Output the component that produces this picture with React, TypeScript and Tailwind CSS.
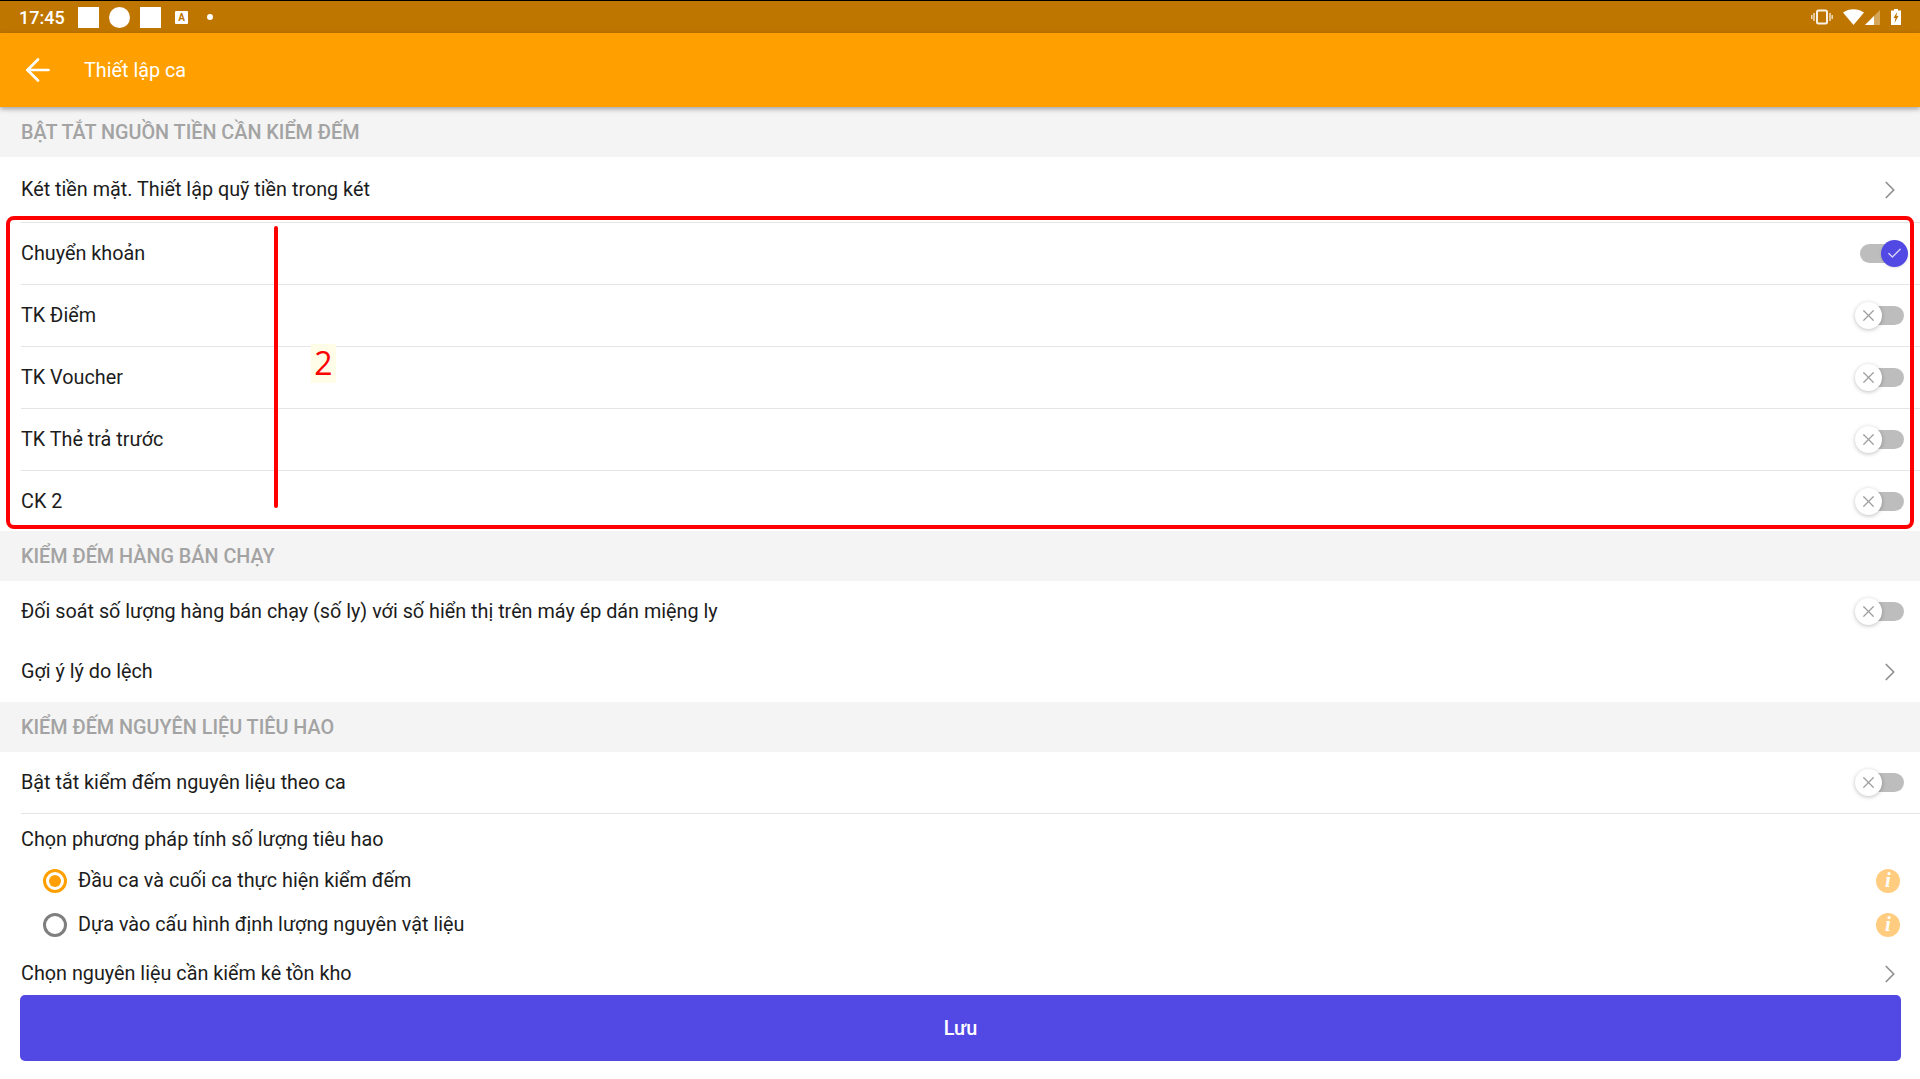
import { ArrowLeft, Check, ChevronRight, X } from "lucide-react";

function Section({ title }: { title: string }) {
  return (
    <div className="h-[50px] flex items-center px-[21px] pt-[2px] bg-[#f4f4f4] text-[19.8px] font-medium text-[#a3a3a3]">
      {title}
    </div>
  );
}

function Toggle({ on }: { on?: boolean }) {
  return (
    <div className="relative w-[44px] h-[19px] rounded-full bg-[#bdbdbd]">
      {on ? (
        <div className="absolute -right-[4px] -top-[4px] w-[27px] h-[27px] rounded-full bg-[#5248e4] shadow flex items-center justify-center">
          <Check size={17} strokeWidth={2} className="text-[#d5d2f8]" />
        </div>
      ) : (
        <div className="absolute -left-[5px] -top-[4px] w-[27px] h-[27px] rounded-full bg-white shadow-[0_1px_4px_rgba(0,0,0,0.25)] flex items-center justify-center">
          <X size={19} strokeWidth={1.5} className="text-[#9e9e9e]" />
        </div>
      )}
    </div>
  );
}

function Row({
  label,
  height,
  divider,
  children,
}: {
  label: string;
  height: string;
  divider?: boolean;
  children?: React.ReactNode;
}) {
  return (
    <div className={`${height} ml-[21px] flex items-center justify-between pr-[16px] ${divider ? "border-b border-[#e5e5e5]" : ""}`}>
      <span>{label}</span>
      {children}
    </div>
  );
}

function Chevron() {
  return <ChevronRight size={30} strokeWidth={1.4} className="text-[#8f8f8f] -mr-[1px]" />;
}

function Info() {
  return (
    <div className="w-[24px] h-[24px] rounded-full bg-[#ffcc80] flex items-center justify-center text-white font-bold italic text-[21px] font-['Liberation_Serif',serif]">
      i
    </div>
  );
}

function Radio({ label, on }: { label: string; on?: boolean }) {
  return (
    <div className="h-[44px] flex items-center justify-between pl-[43px] pr-[20px]">
      <div className="flex items-center gap-[11px]">
        <div className={`w-[24px] h-[24px] rounded-full border-[3px] flex items-center justify-center ${on ? "border-[#ffa000]" : "border-[#7f7f7f]"}`}>
          {on && <div className="w-[12px] h-[12px] rounded-full bg-[#ffa000]" />}
        </div>
        <span>{label}</span>
      </div>
      <Info />
    </div>
  );
}

export default function App() {
  return (
    <div className="relative h-[1079px] bg-white overflow-hidden font-['Roboto',sans-serif] text-[19.8px] text-[#1c1c1c]">
      {/* status bar */}
      <div className="h-[33px] bg-[#bf7600] border-t border-black flex items-center justify-between pl-[19px] pr-[18px] text-white">
        <div className="flex items-center">
          <span className="text-[18px] font-medium w-[59px]">17:45</span>
          <div className="w-[21px] h-[21px] bg-white" />
          <div className="w-[21px] h-[21px] bg-white rounded-full ml-[10px]" />
          <div className="w-[21px] h-[21px] bg-white ml-[10px]" />
          <div className="w-[13px] h-[13px] ml-[14px] bg-white rounded-[1px] text-[#bf7600] text-[10px] font-bold leading-[13px] text-center">A</div>
          <div className="w-[6px] h-[6px] rounded-full bg-white ml-[19px]" />
        </div>
        <div className="flex items-center mr-[1px]">
          <svg width="22" height="16" viewBox="0 0 22 16" fill="none">
            <rect x="6" y="1.5" width="10" height="13" rx="1.5" stroke="white" strokeWidth="2" opacity="0.9" />
            <path d="M3 4v8M19 4v8M0.8 6v4M21.2 6v4" stroke="white" strokeWidth="1.6" opacity="0.7" />
          </svg>
          <svg width="21" height="16" viewBox="0 0 21 16" className="ml-[10px]">
            <path d="M0 3.5C6 -1 15 -1 21 3.5L10.5 16z" fill="white" />
          </svg>
          <svg width="15" height="15" viewBox="0 0 15 15" className="ml-[1px]">
            <path d="M15 0V15H0z" fill="white" opacity="0.35" />
            <path d="M9 6V15H0z" fill="white" />
          </svg>
          <svg width="10" height="16" viewBox="0 0 10 16" className="ml-[11px]">
            <path d="M3 0h4v1.5h3V16H0V1.5h3z" fill="white" />
            <path d="M6 3L2.5 9h2L3.5 14 7.5 7h-2z" fill="#bf7600" />
          </svg>
        </div>
      </div>

      {/* app bar */}
      <div className="relative z-10 h-[74px] bg-[#ffa000] flex items-center pl-[20px] text-white shadow-[0_2px_5px_rgba(0,0,0,0.35)]">
        <ArrowLeft size={36} strokeWidth={1.8} />
        <span className="ml-[28px] mt-[2px] text-[19.8px]">Thiết lập ca</span>
      </div>

      <Section title="BẬT TẮT NGUỒN TIỀN CẦN KIỂM ĐẾM" />
      <Row label="Két tiền mặt. Thiết lập quỹ tiền trong két" height="h-[66px]" divider>
        <Chevron />
      </Row>
      <Row label="Chuyển khoản" height="h-[62px]" divider>
        <Toggle on />
      </Row>
      <Row label="TK Điểm" height="h-[62px]" divider>
        <Toggle />
      </Row>
      <Row label="TK Voucher" height="h-[62px]" divider>
        <Toggle />
      </Row>
      <Row label="TK Thẻ trả trước" height="h-[62px]" divider>
        <Toggle />
      </Row>
      <Row label="CK 2" height="h-[60px] pt-[1px]">
        <Toggle />
      </Row>

      <Section title="KIỂM ĐẾM HÀNG BÁN CHẠY" />
      <Row label="Đối soát số lượng hàng bán chạy (số ly) với số hiển thị trên máy ép dán miệng ly" height="h-[60px] pt-[1px]">
        <Toggle />
      </Row>
      <Row label="Gợi ý lý do lệch" height="h-[61px]">
        <Chevron />
      </Row>

      <Section title="KIỂM ĐẾM NGUYÊN LIỆU TIÊU HAO" />
      <Row label="Bật tắt kiểm đếm nguyên liệu theo ca" height="h-[62px]" divider>
        <Toggle />
      </Row>
      <div className="h-[45px] pl-[21px] flex items-center pt-[7px]">Chọn phương pháp tính số lượng tiêu hao</div>
      <Radio label="Đầu ca và cuối ca thực hiện kiểm đếm" on />
      <Radio label="Dựa vào cấu hình định lượng nguyên vật liệu" />
      <Row label="Chọn nguyên liệu cần kiểm kê tồn kho" height="h-[53px]">
        <Chevron />
      </Row>

      <div className="absolute left-[20px] top-[995px] w-[1881px] h-[66px] pt-[2px] rounded-[5px] bg-[#5248e4] text-white font-medium flex items-center justify-center">
        Lưu
      </div>

      {/* annotation drawn over the screenshot */}
      <div className="absolute left-[6px] top-[216px] w-[1908px] h-[313px] border-[4px] border-[#ff0000] rounded-[8px] pointer-events-none" />
      <div className="absolute left-[274px] top-[226px] w-[4px] h-[282px] bg-[#ff0000] rounded-full" />
      <div className="absolute left-[311px] top-[344px] w-[25px] h-[39px] pb-[2px] bg-[#fffde7] flex items-center justify-center text-[#ff0000] text-[32px] font-medium font-['Open_Sans',sans-serif]">
        2
      </div>
    </div>
  );
}
